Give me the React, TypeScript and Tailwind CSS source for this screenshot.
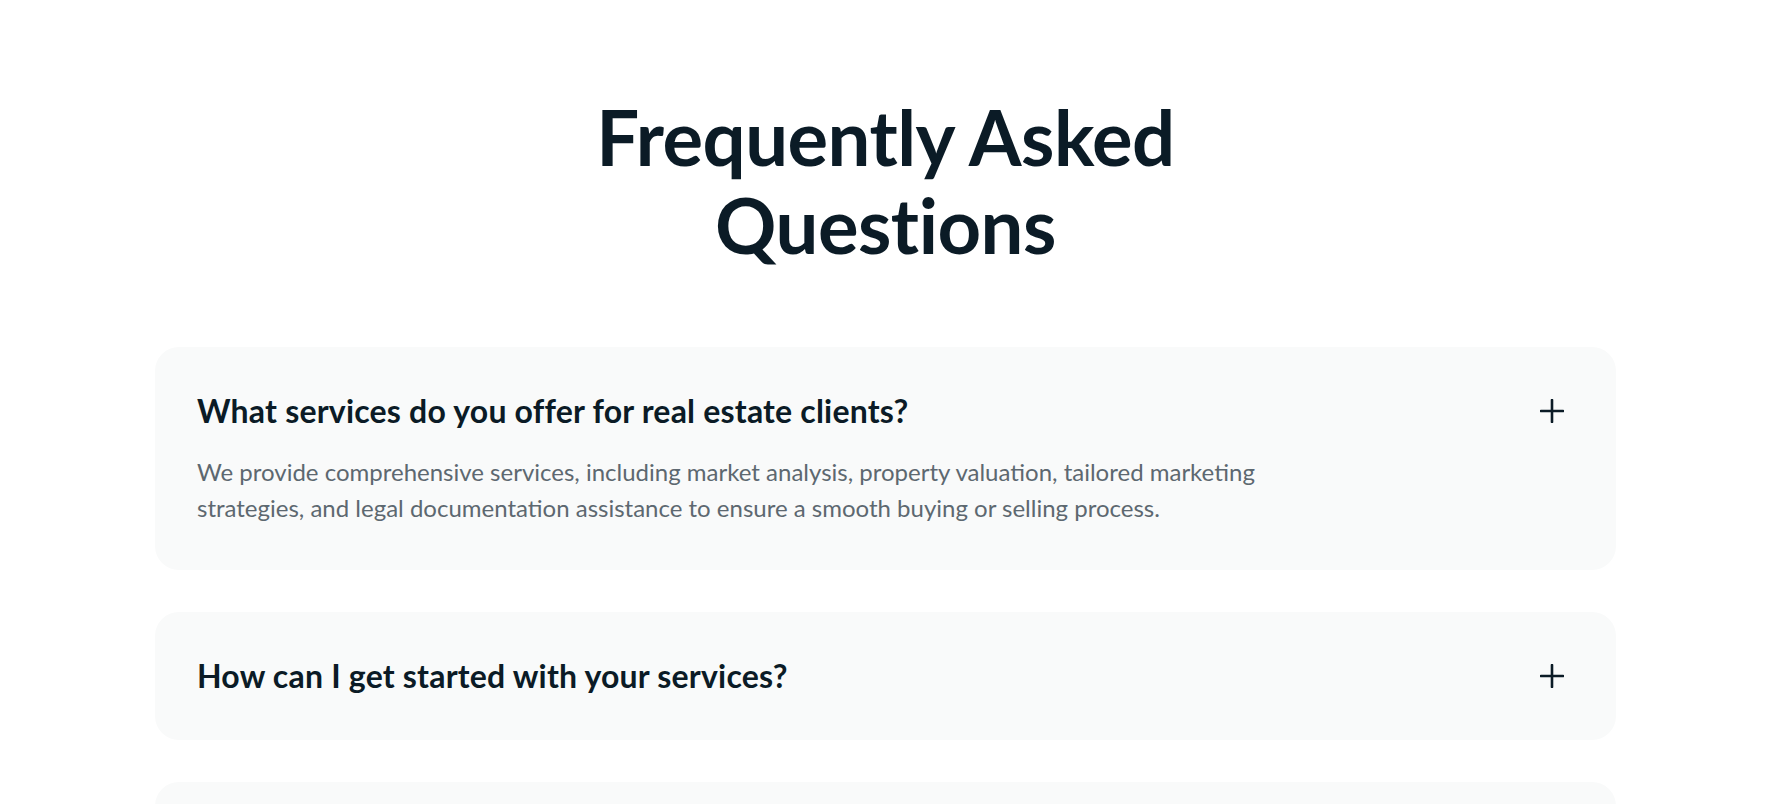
const faqs = [
  {
    q: "What services do you offer for real estate clients?",
    a: "We provide comprehensive services, including market analysis, property valuation, tailored marketing strategies, and legal documentation assistance to ensure a smooth buying or selling process.",
    open: true,
  },
  {
    q: "How can I get started with your services?",
    a: "",
    open: false,
  },
  {
    q: "Do you help with property financing?",
    a: "",
    open: false,
  },
];

function PlusIcon() {
  return (
    <svg width="24" height="24" viewBox="0 0 24 24" fill="none" className="shrink-0">
      <path d="M12 1v22M1 12h22" stroke="#0b1b26" strokeWidth="2.6" strokeLinecap="round" />
    </svg>
  );
}

export default function App() {
  return (
    <section className="min-h-screen bg-white font-['Lato',sans-serif] text-[#0b1b26]">
      <div className="max-w-[1461px] mx-auto pt-[93px]">
        {/* Heading */}
        <h2 className="text-center font-bold text-[76px] leading-[88px] tracking-[-0.5px] mb-[78px]">
          Frequently Asked
          <br />
          Questions
        </h2>

        {/* FAQ list */}
        <div className="flex flex-col gap-[42px]">
          {faqs.map((item) => (
            <div key={item.q} className="bg-[#f9fafa] rounded-[24px] pl-[42px] pr-[52px] py-[44px]">
              <div className="flex items-center justify-between gap-8">
                <h3 className="text-[32px] leading-[40px] font-bold tracking-[0.2px]">{item.q}</h3>
                <PlusIcon />
              </div>
              {item.open && (
                <p className="mt-[23px] max-w-[1120px] text-[24px] leading-[36px] text-[#5d6870]">
                  {item.a}
                </p>
              )}
            </div>
          ))}
        </div>
      </div>
    </section>
  );
}
